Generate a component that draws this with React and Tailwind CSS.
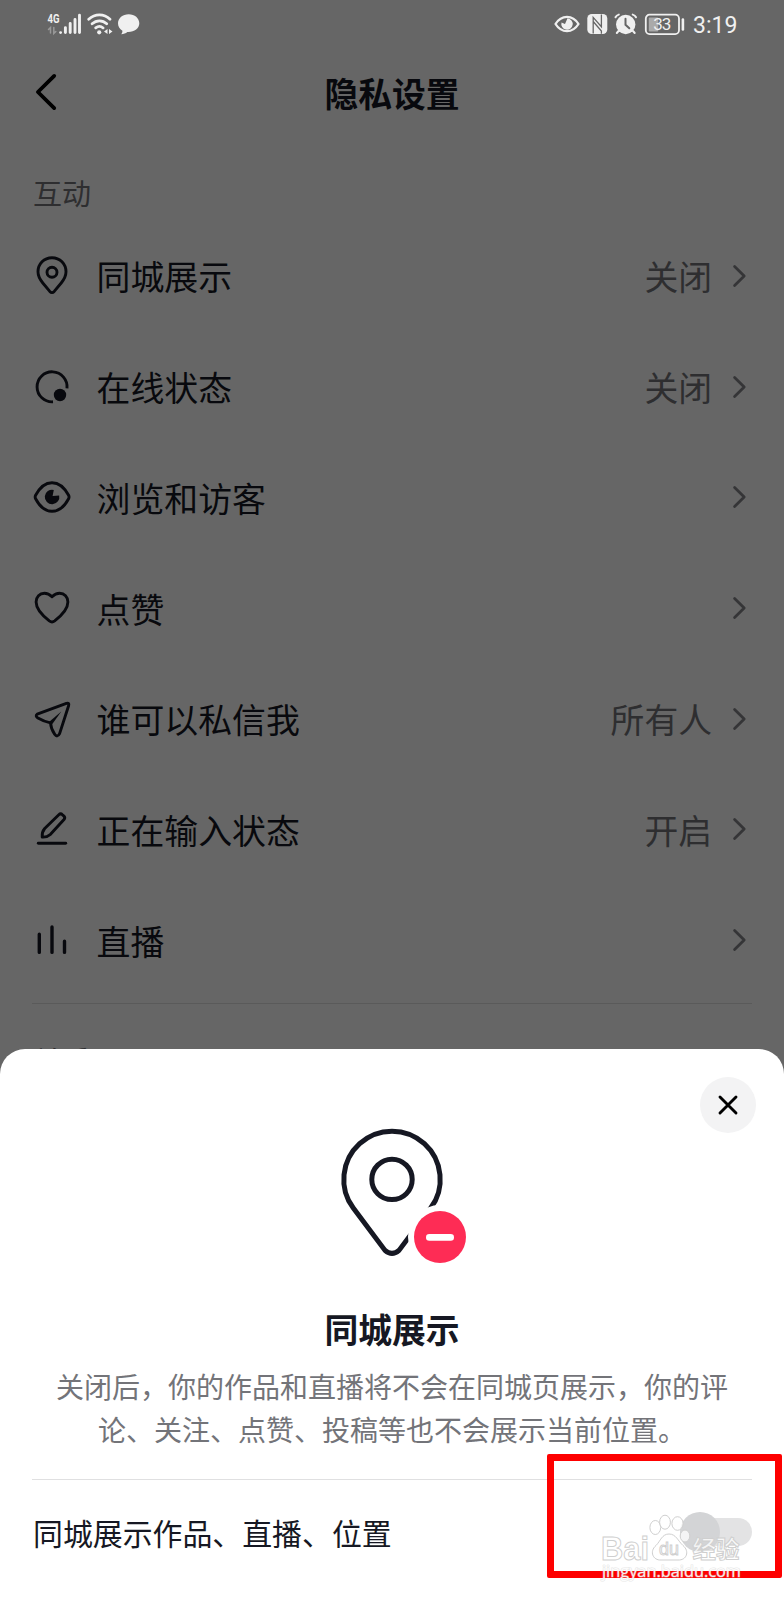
import React from 'react';

// Line icons for the settings rows, all drawn on a 40x40 grid
const icons = {
  pin: (
    <>
      <path d="M20 1.7C12 1.7 6 8 6 15.8c0 4.6 2 7.8 4.8 11.2l7 8.4q2.2 2.4 4.4 0l7-8.4C32 23.600 34 20.400 34 15.800 34 8 28 1.700 20 1.700Z" />
      <circle cx="20" cy="16.200" r="5" />
    </>
  ),
  online: (
    <>
      <path d="M35 21.400A15 15 0 1 0 21 34.800" strokeLinecap="butt" />
      <circle cx="28" cy="28" r="6.200" fill="currentColor" stroke="none" />
    </>
  ),
  eye: (
    <>
      <path d="M3.600 18.300C8 10 13.200 5.700 20 5.700S32.200 10 36.600 18.300q.9 1.700 0 3.400C32.200 30 26.800 34.300 20 34.300S8 30 3.600 21.700q-.9-1.700 0-3.400Z" />
      <path d="M21.800 12.900L20.600 19 27.200 18.400A7.300 7.300 0 1 1 21.800 12.900Z" fill="currentColor" stroke="none" />
    </>
  ),
  heart: (
    <path d="M20 8.800C17.600 6.400 15 5.300 12.400 5.300 7.600 5.300 4.100 9 4.100 14c0 7.600 7.200 14.200 13.200 18.900q2.700 2 5.400 0C28.700 28.200 35.900 21.600 35.900 14c0-5-3.500-8.700-8.300-8.700C25 5.300 22.400 6.400 20 8.800Z" />
  ),
  plane: (
    <>
      <path d="M5.200 15.200L34.400 4.300q3.200-.8 2.200 2.400L27.600 34.600q-2.300 4.400-5 .5-3.600-5-4.100-11.200-6.200-1.200-12.600-4.900-3-2.100-.7-3.800Z" />
      <path d="M29.300 12.500L19.800 25.800 17 23Z" fill="currentColor" stroke="none" />
    </>
  ),
  pen: (
    <>
      <path d="M26.800 5.700q1.800-1.700 3.700.1l1.200 1q1.900 1.700.3 3.700L18.500 25.300q-3.900 3.200-8.300 2.800-.5-5 2.500-8.600Z" />
      <path d="M6.300 34.200h27.400" />
    </>
  ),
  bars: (
    <path d="M7.300 14.200v18.200M20 7v25.400M32.500 21.300v11.100" strokeWidth="3.400" />
  ),
};

const rows = [
  { icon: 'pin', label: '同城展示', value: '关闭' },
  { icon: 'online', label: '在线状态', value: '关闭' },
  { icon: 'eye', label: '浏览和访客' },
  { icon: 'heart', label: '点赞' },
  { icon: 'plane', label: '谁可以私信我', value: '所有人' },
  { icon: 'pen', label: '正在输入状态', value: '开启' },
  { icon: 'bars', label: '直播' },
];

function StatusBar() {
  return (
    <div className="relative z-10 flex h-12 items-center justify-between pl-[47px] pr-[47px] text-[#f0f0f0]">
      <div className="flex items-center">
        {/* Mobile signal */}
        <svg width="36" height="24" viewBox="0 0 36 24" fill="none" stroke="currentColor" strokeLinecap="round">
          <text x="0.500" y="11" fontSize="12.500" fontWeight="700" fontFamily="Roboto, sans-serif" textLength="12" lengthAdjust="spacingAndGlyphs" fill="currentColor" stroke="none">4G</text>
          <path d="M3.500 21v-5.500l-2 2M6.800 15.500v6l2-2" stroke="#999" strokeWidth="1.500" />
          <path d="M13.600 20.600v0M18.400 20.600v-5M23.200 20.600v-9.200M28 20.600v-13.100M32.500 20.600V3.300" strokeWidth="2.900" />
        </svg>
        {/* Wifi */}
        <svg className="ml-1" width="27" height="24" viewBox="0 0 27 24" fill="none" stroke="currentColor" strokeWidth="2.700" strokeLinecap="round">
          <path d="M1.700 7.300C8 1.300 17 1.300 23 7.300M5.100 11.800c4.300-4 10.500-4 14.600 0M8.700 15.900c2.400-2 5.200-2 7.400 0" />
          <circle cx="12.200" cy="20.300" r="2.100" fill="currentColor" stroke="none" />
          <path d="M20.500 17v5l-3.500-2.500ZM22 22v-5l3.500 2.500Z" fill="currentColor" stroke="none" />
        </svg>
        {/* Message bubble */}
        <svg className="ml-[3px]" width="23" height="24" viewBox="0 0 23 24" fill="currentColor">
          <path d="M11.700 2.300C5.700 2.300 1 6.200 1 11.300c0 3.200 1.600 5.800 4.400 7.500.1 1.400-.4 2.500-1.200 3.500 2.500-.1 4.600-1 6.100-2.300 6.800.4 12-3.400 12-8.700 0-5.100-4.600-9-10.600-9Z" />
        </svg>
      </div>
      <div className="flex items-center">
        {/* Eye comfort */}
        <svg width="26" height="24" viewBox="0 0 26 24" fill="none" stroke="currentColor" strokeWidth="2.300">
          <path d="M1.500 12C7.500 2.500 18.500 2.500 24.500 12 18.500 21.500 7.500 21.500 1.500 12Z" strokeLinejoin="round" />
          <path d="M13.500 6.300a5.700 5.700 0 1 1-6 4.200l3.500 1.500Z" fill="currentColor" stroke="none" />
        </svg>
        {/* NFC */}
        <svg className="ml-[7px]" width="21" height="24" viewBox="0 0 21 24">
          <rect x="0.300" y="2" width="20" height="20" rx="4.500" fill="currentColor" />
          <path d="M6.200 21.500V5.400L14.400 14.800V2.500M6.200 9.500L14.400 19V21.700" fill="none" stroke="#666" strokeWidth="1.300" />
        </svg>
        {/* Alarm */}
        <svg className="ml-1.5" width="24" height="24" viewBox="0 0 24 24" fill="none" stroke="currentColor" strokeWidth="2" strokeLinecap="round">
          <circle cx="11.700" cy="12.500" r="9.700" fill="currentColor" stroke="none" />
          <path d="M1.500 5.300Q2.500 3.200 4.800 2.600M18.700 2.600Q21 3.200 22 5.300M4.500 19L2.800 21M19 19l1.700 2" />
          <path d="M11.500 6.800v6l3.800 3.500" stroke="#666" />
        </svg>
        {/* Battery */}
        <svg className="ml-1.5" width="42" height="24" viewBox="0 0 42 24">
          <rect x="1.800" y="2.700" width="33.200" height="19.400" rx="3.800" fill="none" stroke="currentColor" strokeWidth="1.800" />
          <rect x="4.800" y="5.500" width="9.500" height="14" rx="1" fill="#aaa" />
          <path d="M38.900 7.500v10" stroke="currentColor" strokeWidth="2.600" strokeLinecap="round" />
          <text x="18.300" y="18.300" fontSize="17" fontFamily="Roboto, sans-serif" textAnchor="middle" textLength="18" fill="currentColor">33</text>
        </svg>
        <span className="ml-[7px] w-[44px] pt-[3px] text-[23px] leading-6 font-[Roboto,sans-serif]">3:19</span>
      </div>
    </div>
  );
}

function SettingRow({ icon, label, value }) {
  return (
    <div className="flex h-[110.7px] items-center pl-8 pr-[37px]">
      <svg
        width="40"
        height="40"
        viewBox="0 0 40 40"
        fill="none"
        stroke="currentColor"
        strokeWidth="2.900"
        strokeLinecap="round"
        strokeLinejoin="round"
      >
        {icons[icon]}
      </svg>
      <span className="ml-[24.5px] pt-px text-[33.9px] leading-10">{label}</span>
      <span className="ml-auto pt-px text-[33.8px] leading-10 text-[#737479]">{value}</span>
      <svg className="ml-[19px] text-[#85868a]" width="16" height="24" viewBox="0 0 16 24" fill="none" stroke="currentColor" strokeWidth="2.800" strokeLinecap="round" strokeLinejoin="round">
        <path d="M3.600 2.500L13.200 12 3.600 21.500" />
      </svg>
    </div>
  );
}

function SectionTitle({ children }) {
  return (
    <h2 className="mt-[27px] flex h-[57px] items-center pt-[2px] pl-[33px] text-[29px] text-[#737479]">
      {children}
    </h2>
  );
}

function LocationSheet() {
  return (
    <div className="absolute inset-x-0 bottom-0 h-[551px] rounded-t-[25px] bg-white">
      <button className="absolute top-7 right-7 flex size-14 items-center justify-center rounded-full bg-[#f3f3f4] text-black">
        <svg width="22" height="22" viewBox="0 0 22 22" fill="none" stroke="currentColor" strokeWidth="2.900" strokeLinecap="round">
          <path d="M3 3l16 16M19 3L3 19" />
        </svg>
      </button>

      <div className="flex flex-col items-center pt-[71px]">
        <svg width="160" height="150" viewBox="0 0 160 150" fill="none" stroke="#161823" strokeWidth="5">
          <path d="M41.300 88.100A48.200 48.200 0 1 1 118.700 88.100L87 130.400Q80 136.500 73 130.400Z" />
          <circle cx="80" cy="59.400" r="20.200" />
          <circle cx="128" cy="117" r="32" fill="#fff" stroke="none" />
          <circle cx="128" cy="117" r="26" fill="#fe2c55" stroke="none" />
          <path d="M117.300 117.400h21.400" stroke="#fff" strokeWidth="6.600" strokeLinecap="round" />
        </svg>
        <h3 className="mt-[34px] text-[33.8px] leading-[50px] font-bold">同城展示</h3>
        <p className="mt-[11px] text-center text-[28px] leading-[42.7px] text-[#737479]">
          关闭后，你的作品和直播将不会在同城页展示，你的评
          <br />
          论、关注、点赞、投稿等也不会展示当前位置。
        </p>
      </div>

      <div className="mx-8 mt-[29px] flex h-[105px] items-center justify-between border-t border-[#e0e0e1]">
        <span className="pl-px text-[29.9px]">同城展示作品、直播、位置</span>
        {/* Switch, off */}
        <div className="flex h-7 w-[72px] items-center rounded-full bg-[#e3e3e4]">
          <div className="size-10 shrink-0 rounded-full bg-[#d3d4d6]" />
        </div>
      </div>
    </div>
  );
}

function Watermark() {
  return (
    <svg
      className="absolute left-[596px] top-[1510px]"
      width="150"
      height="78"
      viewBox="0 0 150 78"
      fill="#fff"
      fillOpacity="0.750"
      stroke="#cfcfcf"
      strokeWidth="1"
    >
      <text x="5" y="49.500" fontSize="33" fontWeight="700" fontFamily="'Liberation Sans', sans-serif" textLength="48" lengthAdjust="spacingAndGlyphs">Bai</text>
      <ellipse cx="59.300" cy="17.500" rx="5.400" ry="7" />
      <ellipse cx="69" cy="12.200" rx="5.400" ry="7" />
      <ellipse cx="81.500" cy="13.500" rx="5.600" ry="6.800" />
      <ellipse cx="89" cy="26" rx="4.800" ry="6" />
      <path d="M73 24C66 24 64.500 31 60 35.500 53 41.500 57 50.500 65 50H82C90.500 50.500 94 41.500 87 35.500 82 31 80 24 73 24Z" />
      <text x="63" y="45" fontSize="19" fontFamily="'Liberation Sans', sans-serif" textLength="20" lengthAdjust="spacingAndGlyphs">du</text>
      <text x="96.500" y="47.800" fontSize="23.500" fontWeight="700" fontFamily="'Noto Sans CJK SC', sans-serif">经验</text>
      <text x="6" y="67" fontSize="16.500" fontFamily="'Open Sans', sans-serif" textLength="139" lengthAdjust="spacingAndGlyphs" strokeWidth="1.200" strokeOpacity="0.500" paintOrder="stroke" fillOpacity="0.900">jingyan.baidu.com</text>
    </svg>
  );
}

function App() {
  return (
    <div className="relative h-[1600px] w-[784px] overflow-hidden bg-white font-['Noto_Sans_CJK_SC',sans-serif] text-[#161823]">
      <StatusBar />

      <header className="relative flex h-[88px] items-center justify-center">
        <svg className="absolute left-[34px] top-6 text-black" width="24" height="40" viewBox="0 0 24 40" fill="none" stroke="currentColor" strokeWidth="3.800" strokeLinecap="round" strokeLinejoin="round">
          <path d="M20.200 3.900L3.900 20l16.300 16.100" />
        </svg>
        <h1 className="pt-[2px] text-[33.8px] leading-[50px] font-bold">隐私设置</h1>
      </header>

      <SectionTitle>互动</SectionTitle>
      <div className="pt-[0.6px]">
        {rows.map((row) => (
          <SettingRow key={row.icon} {...row} />
        ))}
      </div>
      <div className="mx-8 mt-[7.5px] h-px bg-[#e0e0e1]" />
      <SectionTitle>关系</SectionTitle>

      {/* Dimmed backdrop */}
      <div className="absolute inset-0 bg-black/60" />

      <LocationSheet />

      {/* Highlight around the switch */}
      <div className="absolute left-[547px] top-[1454px] h-[124px] w-[235px] rounded-[2px] border-[7px] border-[#fe0000]" />
      <Watermark />
    </div>
  );
}

export default App;
